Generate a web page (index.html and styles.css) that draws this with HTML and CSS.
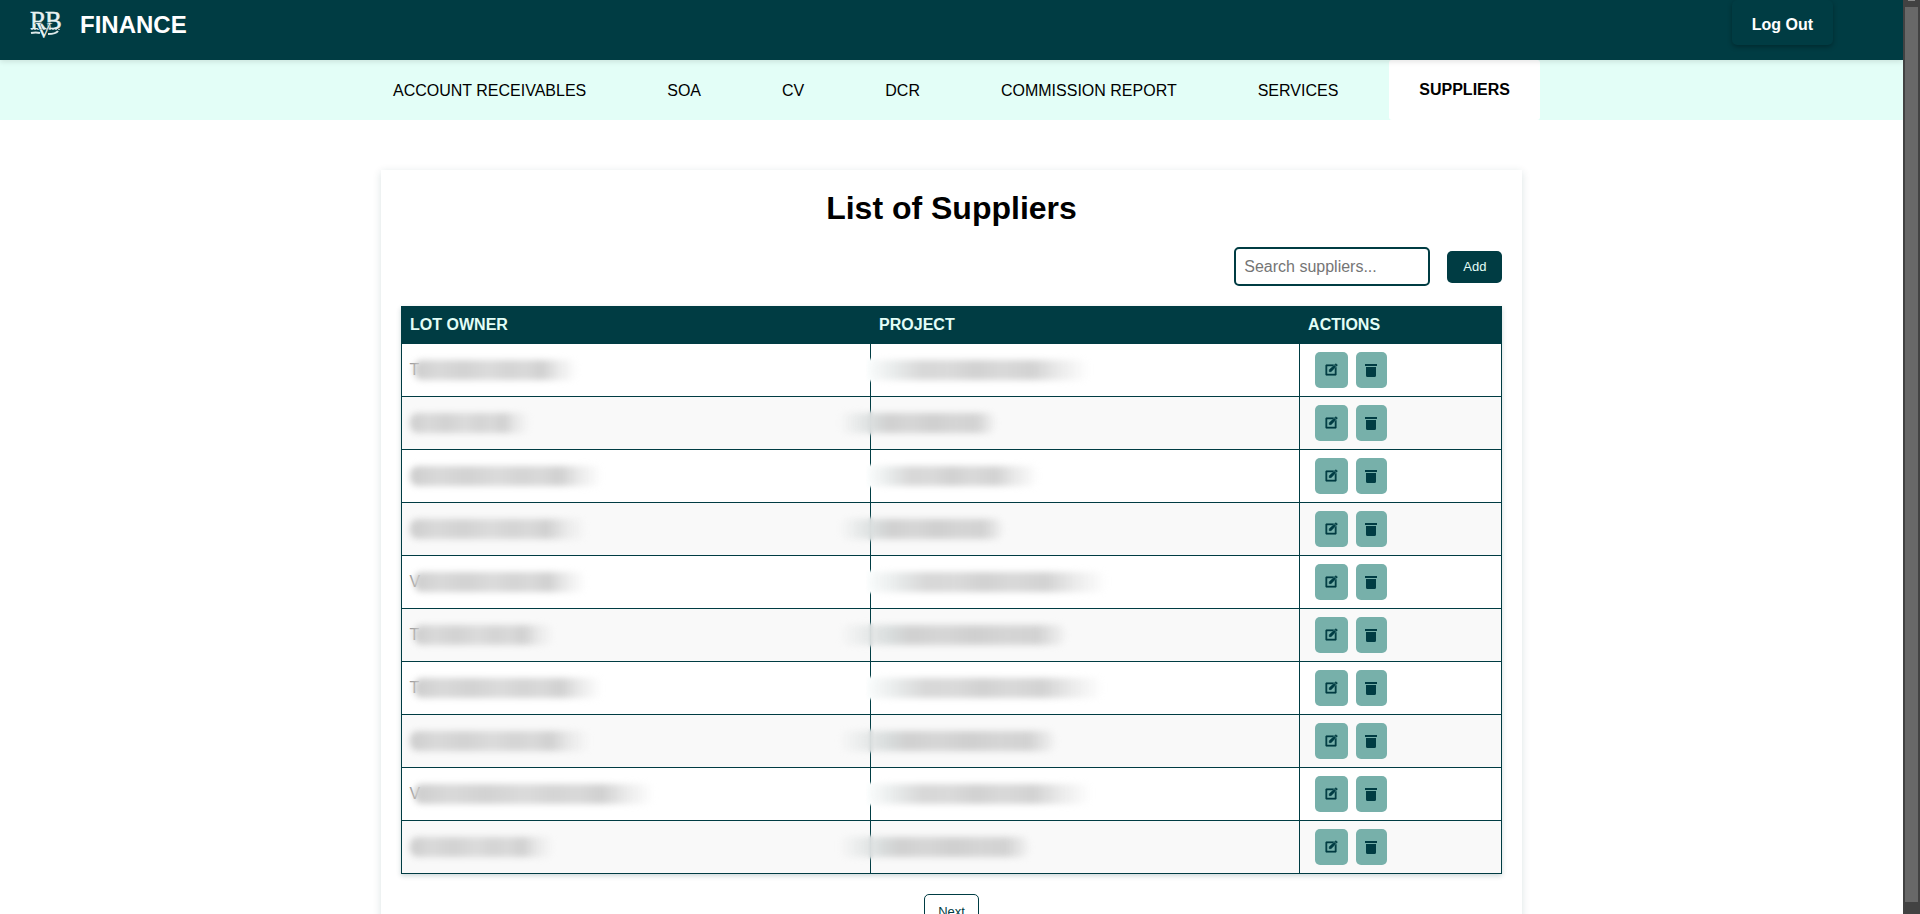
FILE: index.html
```html
<!DOCTYPE html>
<html lang="en">
<head>
<meta charset="utf-8">
<title>Finance - Suppliers</title>
<link rel="stylesheet" href="styles.css">
</head>
<body>
<svg class="sprite" aria-hidden="true">
  <symbol id="edit" viewBox="0 0 24 24"><path fill="currentColor" d="M16.76 3l-2 2H5v14h14V9.24l2-2V20a1 1 0 0 1-1 1H4a1 1 0 0 1-1-1V4a1 1 0 0 1 1-1z" stroke="currentColor" stroke-width="1"/><path fill="currentColor" d="M17.5 3.8l2.7 2.7-8 8.3H9v-3.100zM18.500 2.800l1.200-1.200a1 1 0 0 1 1.400 0l1.300 1.300a1 1 0 0 1 0 1.400l-1.200 1.200z" stroke="currentColor" stroke-width="1"/></symbol>
  <symbol id="trash" viewBox="0 0 14 14"><path fill="currentColor" d="M1 1h12v2H1zM2 4h10v8.500a1.500 1.500 0 0 1-1.500 1.500h-7A1.500 1.500 0 0 1 2 12.500z"/></symbol>
</svg>
<div class="window">
  <div class="page">
    <header class="header">
      <div class="brand">
        <svg class="logo" viewBox="0 0 32 28" role="img" aria-label="RVB">
          <g fill="#e8f1f1" font-family="Liberation Serif, serif">
            <text x="0" y="18" font-size="25" stroke="#e8f1f1" stroke-width=".5">R</text>
            <text x="15" y="18" font-size="25" stroke="#e8f1f1" stroke-width=".5">B</text>
            <text x="5" y="27" font-size="24" stroke="#003c43" stroke-width="1" paint-order="stroke">V</text>
          </g>
          <path d="M1 18.500h30" stroke="#9fb9ba" stroke-dasharray="2 1" fill="none"/>
          <path d="M1 22q5-1 9 0M18 23q8 0 10-3" stroke="#dbe8e8" stroke-width="2" fill="none"/>
        </svg>
        <span class="brand-name">FINANCE</span>
      </div>
      <button class="logout" type="button">Log Out</button>
    </header>
    <nav class="nav">
      <a class="tab" href="#">ACCOUNT RECEIVABLES</a>
      <a class="tab" href="#">SOA</a>
      <a class="tab" href="#">CV</a>
      <a class="tab" href="#">DCR</a>
      <a class="tab" href="#">COMMISSION REPORT</a>
      <a class="tab" href="#">SERVICES</a>
      <a class="tab active" href="#" aria-current="page">SUPPLIERS</a>
    </nav>
    <main class="card">
      <h1 class="title">List of Suppliers</h1>
      <div class="toolbar">
        <input class="search" type="text" placeholder="Search suppliers..." aria-label="Search suppliers">
        <button class="add" type="button">Add</button>
      </div>
      <table class="suppliers">
        <thead>
          <tr><th class="col-owner">LOT OWNER</th><th class="col-project">PROJECT</th><th>ACTIONS</th></tr>
        </thead>
        <tbody>
          <tr><td><div class="veil"><span class="initial">T</span><span class="smear" style="width:164px"></span></div></td><td><div class="veil lead"><span class="smear" style="width:218px"></span></div></td><td><div class="actions"><button class="icon-btn edit" type="button" aria-label="Edit"><svg><use href="#edit"/></svg></button><button class="icon-btn" type="button" aria-label="Delete"><svg><use href="#trash"/></svg></button></div></td></tr>
          <tr><td><div class="veil"><span class="smear" style="width:120px"></span></div></td><td><div class="veil lead"><span class="smear" style="width:156px"></span></div></td><td><div class="actions"><button class="icon-btn edit" type="button" aria-label="Edit"><svg><use href="#edit"/></svg></button><button class="icon-btn" type="button" aria-label="Delete"><svg><use href="#trash"/></svg></button></div></td></tr>
          <tr><td><div class="veil"><span class="smear" style="width:192px"></span></div></td><td><div class="veil lead"><span class="smear" style="width:168px"></span></div></td><td><div class="actions"><button class="icon-btn edit" type="button" aria-label="Edit"><svg><use href="#edit"/></svg></button><button class="icon-btn" type="button" aria-label="Delete"><svg><use href="#trash"/></svg></button></div></td></tr>
          <tr><td><div class="veil"><span class="smear" style="width:176px"></span></div></td><td><div class="veil lead"><span class="smear" style="width:164px"></span></div></td><td><div class="actions"><button class="icon-btn edit" type="button" aria-label="Edit"><svg><use href="#edit"/></svg></button><button class="icon-btn" type="button" aria-label="Delete"><svg><use href="#trash"/></svg></button></div></td></tr>
          <tr><td><div class="veil"><span class="initial">V</span><span class="smear" style="width:172px"></span></div></td><td><div class="veil lead"><span class="smear" style="width:236px"></span></div></td><td><div class="actions"><button class="icon-btn edit" type="button" aria-label="Edit"><svg><use href="#edit"/></svg></button><button class="icon-btn" type="button" aria-label="Delete"><svg><use href="#trash"/></svg></button></div></td></tr>
          <tr><td><div class="veil"><span class="initial">T</span><span class="smear" style="width:140px"></span></div></td><td><div class="veil lead"><span class="smear" style="width:226px"></span></div></td><td><div class="actions"><button class="icon-btn edit" type="button" aria-label="Edit"><svg><use href="#edit"/></svg></button><button class="icon-btn" type="button" aria-label="Delete"><svg><use href="#trash"/></svg></button></div></td></tr>
          <tr><td><div class="veil"><span class="initial">T</span><span class="smear" style="width:188px"></span></div></td><td><div class="veil lead"><span class="smear" style="width:232px"></span></div></td><td><div class="actions"><button class="icon-btn edit" type="button" aria-label="Edit"><svg><use href="#edit"/></svg></button><button class="icon-btn" type="button" aria-label="Delete"><svg><use href="#trash"/></svg></button></div></td></tr>
          <tr><td><div class="veil"><span class="smear" style="width:180px"></span></div></td><td><div class="veil lead"><span class="smear" style="width:216px"></span></div></td><td><div class="actions"><button class="icon-btn edit" type="button" aria-label="Edit"><svg><use href="#edit"/></svg></button><button class="icon-btn" type="button" aria-label="Delete"><svg><use href="#trash"/></svg></button></div></td></tr>
          <tr><td><div class="veil"><span class="initial">V</span><span class="smear" style="width:240px"></span></div></td><td><div class="veil lead"><span class="smear" style="width:220px"></span></div></td><td><div class="actions"><button class="icon-btn edit" type="button" aria-label="Edit"><svg><use href="#edit"/></svg></button><button class="icon-btn" type="button" aria-label="Delete"><svg><use href="#trash"/></svg></button></div></td></tr>
          <tr><td><div class="veil"><span class="smear" style="width:144px"></span></div></td><td><div class="veil lead"><span class="smear" style="width:190px"></span></div></td><td><div class="actions"><button class="icon-btn edit" type="button" aria-label="Edit"><svg><use href="#edit"/></svg></button><button class="icon-btn" type="button" aria-label="Delete"><svg><use href="#trash"/></svg></button></div></td></tr>
        </tbody>
      </table>
      <div class="pager"><button class="next" type="button">Next</button></div>
    </main>
  </div>
  <div class="scrollbar" aria-hidden="true"><div class="arrow"></div><div class="thumb"></div></div>
</div>
</body>
</html>
```
FILE: styles.css
```css
* { box-sizing: border-box; }
body { margin: 0; font-family: "Liberation Sans", Arial, sans-serif; font-size: 16px; color: #000; background: #fff; }
button, input { font-family: inherit; margin: 0; }
.sprite { display: none; }
.window { display: flex; height: 100vh; overflow: hidden; }
.page { flex: 1; min-width: 0; overflow: hidden; }

.scrollbar { width: 17px; display: flex; flex-direction: column; align-items: center; gap: 6px; padding-bottom: 12px; background: #424242; }
.arrow { width: 7px; height: 1px; background: #8b8b8b; }
.thumb { flex: 1; width: 13px; background: #686868; }

.header { position: relative; display: flex; justify-content: space-between; align-items: flex-start; height: 60px; padding: 0 70px 0 30px; background: #003c43; box-shadow: 0 2px 5px rgba(0, 0, 0, 0.1); }
.brand { display: flex; align-items: center; gap: 18px; padding-top: 11px; }
.logo { width: 32px; height: 28px; overflow: visible; }
.brand-name { font-size: 24px; line-height: 28px; font-weight: bold; color: #fff; }
.logout { padding: 16px 20px 11px; border: 0; border-radius: 5px; background: #003c43; color: #fff; font-size: 16px; line-height: 18px; font-weight: bold; box-shadow: 0 2px 5px rgba(0, 0, 0, 0.3); }

.nav { display: flex; justify-content: center; gap: 21px; background: #e3fef7; }
.tab { padding: 21px 30px 19px; line-height: 20px; color: #000; text-decoration: none; white-space: nowrap; }
.tab.active { padding: 20px 30px; border-radius: 3px; background: #fff; font-weight: bold; }

.card { width: 60%; margin: 50px auto 0; padding: 20px; background: #fff; box-shadow: 0 2px 8px rgba(0, 60, 67, 0.15); }
.title { margin: 0 0 20px; font-size: 32px; line-height: 37px; text-align: center; }
.toolbar { display: flex; justify-content: flex-end; align-items: center; gap: 17px; margin-bottom: 20px; }
.search { width: 196px; height: 39px; padding: 8px; border: 2px solid #003c43; border-radius: 5px; background: #fff; font-size: 16px; }
.search::placeholder { color: #757575; }
.add { height: 32px; padding: 0 16px; border: 0; border-radius: 5px; background: #003c43; color: #e3fef7; font-size: 13px; }

.suppliers { width: 100%; table-layout: fixed; border-collapse: collapse; box-shadow: 0 2px 5px rgba(0, 60, 67, 0.2); }
.suppliers th { height: 37px; padding: 0 9px; background: #003c43; color: #e3fef7; text-align: left; border-top: 1px solid #003c43; border-bottom: 1px solid #003c43; }
.suppliers td { height: 53px; padding: 0 8px; border: 1px solid #003c43; }
.suppliers tbody tr:nth-child(even) { background: #f9f9f9; }
.suppliers .col-owner { width: 469px; }
.suppliers .col-project { width: 429px; }

.veil { position: relative; display: flex; align-items: center; height: 20px; }
.initial { position: absolute; left: 0; color: #999; }
.smear { position: relative; height: 20px; border-radius: 8px; filter: blur(3px); background: linear-gradient(90deg, #cdcdcd 0, #d9d9d9 15%, #d2d2d2 30%, #dbdbdb 46%, #d4d4d4 58%, #d9d9d9 68%, #d0d0d0 78%, rgba(225, 225, 225, 0.7) 88%, rgba(240, 240, 240, 0) 100%); }
.initial + .smear { margin-left: 4px; }
.lead { margin-left: -8px; }
/* soft patch over the column rule where the project text is blurred */
.lead::before { content: ""; position: absolute; left: -4px; width: 12px; height: 22px; background: #fbfdfd; filter: blur(1px); }
.lead .smear { background: linear-gradient(90deg, rgba(240, 244, 244, 0.4) 0, #e9ecec 10%, #d7d7d7 24%, #dadada 36%, #d1d1d1 48%, #d9d9d9 60%, #d2d2d2 74%, rgba(225, 225, 225, 0.7) 86%, rgba(240, 240, 240, 0) 100%); }
tr:nth-child(even) .lead { margin-left: -40px; }
tr:nth-child(even) .lead::before { left: 30px; width: 4px; background: #dfe3e4; }
tr:nth-child(even) .lead .smear { background: linear-gradient(90deg, rgba(240, 243, 243, 0) 0, #d9dddd 22%, #d0d0d0 32%, #d6d6d6 46%, #cfcfcf 60%, #d5d5d5 74%, #d2d2d2 88%, rgba(235, 235, 235, 0.4) 100%); }

.actions { display: flex; gap: 8px; padding-left: 7px; }
.icon-btn { display: flex; align-items: center; justify-content: center; width: 31px; height: 36px; padding: 0; border: 0; border-radius: 5px; background: #77b0aa; color: #003c43; }
.icon-btn.edit { width: 33px; }
.icon-btn svg { width: 14px; height: 14px; }

.pager { display: flex; justify-content: center; margin-top: 20px; }
.next { height: 34px; padding: 0 13px; border: 1px solid #003c43; border-radius: 5px; background: #fff; color: #003c43; font-size: 13px; }
```
